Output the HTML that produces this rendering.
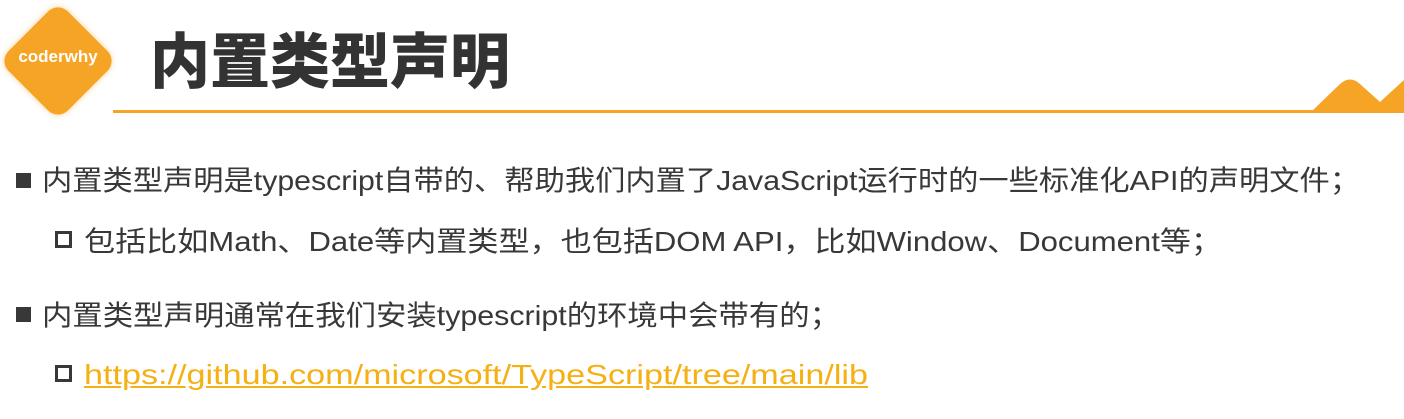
<!DOCTYPE html>
<html><head><meta charset="utf-8">
<style>
html,body{margin:0;padding:0;background:#fff;}
body{width:1404px;height:419px;position:relative;overflow:hidden;font-family:"Liberation Sans","Noto Sans CJK SC",sans-serif;color:#383838;}
.logo{position:absolute;left:16px;top:19px;width:84px;height:84px;background:#f5a425;border-radius:14px;transform:rotate(45deg);box-shadow:0 0 6px rgba(245,164,37,.5);}
.logotxt{position:absolute;left:8px;top:47px;width:100px;text-align:center;color:#fff;font-weight:bold;font-size:17px;}
.title{position:absolute;left:150px;top:18px;font-family:"Noto Sans CJK SC",sans-serif;font-weight:900;font-size:60px;color:#333;line-height:80px;}
.line{position:absolute;left:113px;top:110px;width:1220px;height:3px;background:#f5a425;}
.t{position:absolute;white-space:nowrap;font-size:28px;line-height:36px;transform-origin:0 50%;}
.sq{position:absolute;width:15px;height:15px;background:#383838;}
.hs{position:absolute;width:11px;height:11px;border:3px solid #383838;}
a{color:#f5b014;text-decoration:underline;}
</style></head><body>
<div class="logo"></div>
<div class="logotxt">coderwhy</div>
<div class="title">内置类型声明</div>
<div class="line"></div>
<svg style="position:absolute;left:0;top:0" width="1404" height="419"><path d="M1310 113 L1340 84 Q1350 75 1360 84 L1380 102 L1404 80 L1404 113 Z" fill="#f5a425"/></svg>

<div class="sq" style="left:16px;top:173px"></div>
<div class="t" data-w="1318" style="left:42px;top:163px">内置类型声明是typescript自带的、帮助我们内置了JavaScript运行时的一些标准化API的声明文件；</div>
<div class="hs" style="left:55px;top:231px"></div>
<div class="t" data-w="1138" style="left:84px;top:224px">包括比如Math、Date等内置类型，也包括DOM API，比如Window、Document等；</div>
<div class="sq" style="left:16px;top:307px"></div>
<div class="t" data-w="798" style="left:42px;top:298px">内置类型声明通常在我们安装typescript的环境中会带有的；</div>
<div class="hs" style="left:55px;top:365px"></div>
<div class="t" data-w="784" style="left:84px;top:357px"><a>https://github.com/microsoft/TypeScript/tree/main/lib</a></div>
<script>
document.querySelectorAll('.t').forEach(function(e){var w=e.getBoundingClientRect().width;var t=+e.dataset.w;e.style.transform='scaleX('+(t/w)+')';});
</script>
</body></html>
